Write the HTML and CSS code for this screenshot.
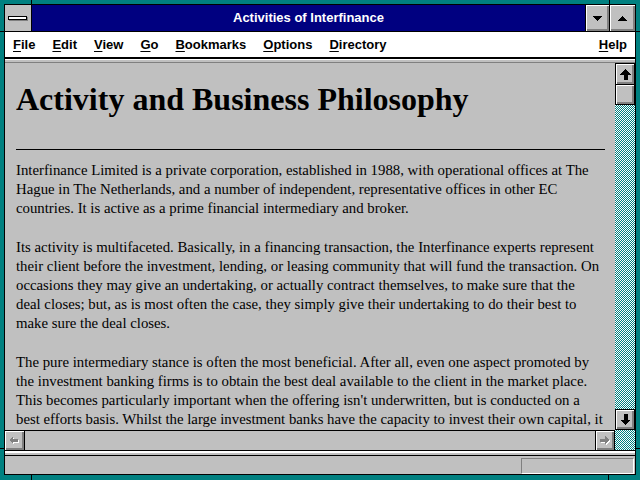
FILE: index.html
```html
<!DOCTYPE html>
<html>
<head>
<meta charset="utf-8">
<title>Activities of Interfinance</title>
<link rel="stylesheet" href="styles.css">
</head>
<body>
<div class="window">
  <div class="frame">
    <div class="titlebar">
      <div class="sysmenu"><span class="sysbar"></span></div>
      <div class="title">Activities of Interfinance</div>
      <div class="tbtn"><svg width="9" height="5" viewBox="0 0 9 5"><polygon points="0,0 9,0 4.5,5" fill="#000"/></svg></div>
      <div class="tbtn tbtn-last"><svg width="9" height="5" viewBox="0 0 9 5"><polygon points="0,5 9,5 4.5,0" fill="#000"/></svg></div>
    </div>
    <div class="menubar">
      <span class="mi"><u>F</u>ile</span>
      <span class="mi"><u>E</u>dit</span>
      <span class="mi"><u>V</u>iew</span>
      <span class="mi"><u>G</u>o</span>
      <span class="mi"><u>B</u>ookmarks</span>
      <span class="mi"><u>O</u>ptions</span>
      <span class="mi"><u>D</u>irectory</span>
      <span class="mi help"><u>H</u>elp</span>
    </div>
    <div class="toolsep"></div>
    <div class="main">
      <div class="content">
        <h1>Activity and Business Philosophy</h1>
        <hr>
        <p>Interfinance Limited is a private corporation, established in 1988, with operational offices at The<br>Hague in The Netherlands, and a number of independent, representative offices in other EC<br>countries. It is active as a prime financial intermediary and broker.</p>
        <p>Its activity is multifaceted. Basically, in a financing transaction, the Interfinance experts represent<br>their client before the investment, lending, or leasing community that will fund the transaction. On<br>occasions they may give an undertaking, or actually contract themselves, to make sure that the<br>deal closes; but, as is most often the case, they simply give their undertaking to do their best to<br>make sure the deal closes.</p>
        <p>The pure intermediary stance is often the most beneficial. After all, even one aspect promoted by<br>the investment banking firms is to obtain the best deal available to the client in the market place.<br>This becomes particularly important when the offering isn't underwritten, but is conducted on a<br>best efforts basis. Whilst the large investment banks have the capacity to invest their own capital, it</p>
      </div>
      <div class="vscroll">
        <div class="sbtn sbtn-up"><svg width="11" height="11" viewBox="0 0 11 11"><polygon points="5.5,0 11,5.5 7.5,5.5 7.5,11 3.5,11 3.5,5.5 0,5.5" fill="#000"/></svg></div>
        <div class="thumb"></div>
        <div class="track"></div>
        <div class="sbtn sbtn-down"><svg width="11" height="11" viewBox="0 0 11 11"><polygon points="5.5,11 11,5.5 7.5,5.5 7.5,0 3.5,0 3.5,5.5 0,5.5" fill="#000"/></svg></div>
      </div>
      <div class="hscroll">
        <div class="sbtn hbtn"><svg width="11" height="10" viewBox="0 0 11 10"><polygon transform="translate(1,1)" points="0,4 4,0 4,2.5 9,2.5 9,5.5 4,5.5 4,8" fill="#fff"/><polygon points="0,4 4,0 4,2.5 9,2.5 9,5.5 4,5.5 4,8" fill="#808080"/></svg></div>
        <div class="htrack"></div>
        <div class="sbtn hbtn"><svg width="11" height="10" viewBox="0 0 11 10"><polygon transform="translate(1,1)" points="9,4 5,0 5,2.5 0,2.5 0,5.5 5,5.5 5,8" fill="#fff"/><polygon points="9,4 5,0 5,2.5 0,2.5 0,5.5 5,5.5 5,8" fill="#808080"/></svg></div>
      </div>
      <div class="corner"></div>
    </div>
    <div class="statsep"></div>
    <div class="status"><div class="statbox"></div></div>
  </div>
</div>
</body>
</html>
```
FILE: styles.css
```css
html, body {
  margin: 0;
  padding: 0;
}
body {
  width: 640px;
  height: 480px;
  overflow: hidden;
}
.window {
  width: 640px;
  height: 480px;
  box-sizing: border-box;
  padding: 4px 4px 5px 4px;
  background:
    linear-gradient(#000, #000) 31px 0 / 1px 4px no-repeat,
    linear-gradient(#000, #000) 609px 0 / 1px 4px no-repeat,
    linear-gradient(#000, #000) 31px 475px / 1px 5px no-repeat,
    linear-gradient(#000, #000) 608px 475px / 1px 5px no-repeat,
    linear-gradient(#000, #000) 0 31px / 4px 1px no-repeat,
    linear-gradient(#000, #000) 636px 31px / 4px 1px no-repeat,
    linear-gradient(#000, #000) 0 448px / 4px 1px no-repeat,
    linear-gradient(#000, #000) 636px 448px / 4px 1px no-repeat,
    #008080;
}
.frame {
  height: 100%;
  box-sizing: border-box;
  border: 1px solid #000;
  display: flex;
  flex-direction: column;
  background: #c0c0c0;
}
.titlebar {
  display: flex;
  height: 27px;
  box-sizing: border-box;
  border-bottom: 1px solid #000;
  background: #000080;
}
.sysmenu {
  width: 27px;
  box-sizing: border-box;
  border-right: 1px solid #000;
  background: #c0c0c0;
  display: flex;
  align-items: center;
  justify-content: center;
}
.sysbar {
  display: block;
  width: 17px;
  height: 2px;
  background: #fff;
  border: 1px solid #000;
  box-shadow: 1px 1px 0 #808080;
  margin-left: -1px;
  margin-top: -1px;
}
.title {
  flex: 1;
  color: #fff;
  font: bold 13px/26px "Liberation Sans", Arial, sans-serif;
  text-align: center;
}
.tbtn {
  width: 24px;
  box-sizing: border-box;
  border-left: 1px solid #000;
  background: #c0c0c0;
  box-shadow: inset 1px 1px 0 #fff, inset -2px -2px 0 #808080;
  display: flex;
  align-items: center;
  justify-content: center;
}
.tbtn-last {
  width: 26px;
}
.tbtn svg, .sbtn svg {
  display: block;
  shape-rendering: crispEdges;
}
.menubar {
  display: flex;
  align-items: center;
  gap: 17px;
  height: 27px;
  box-sizing: border-box;
  padding: 0 8px 1px 8px;
  background: #fff;
  border-bottom: 2px solid #000;
  font: bold 13px "Liberation Sans", Arial, sans-serif;
  color: #000;
}
.mi u {
  text-decoration-thickness: 1px;
  text-underline-offset: 2px;
}
.help {
  margin-left: auto;
}
.toolsep {
  height: 4px;
  box-sizing: border-box;
  background: #c0c0c0;
  border-top: 1px solid #fff;
  border-bottom: 1px solid #808080;
}
.main {
  display: grid;
  grid-template-columns: 1fr 20px;
  grid-template-rows: 367px 20px;
}
.content {
  overflow: hidden;
  padding: 0 10px 0 11px;
  background: #c0c0c0;
  color: #000;
  font-family: "Liberation Serif", "Times New Roman", serif;
}
.content h1 {
  margin: 18px 0 0 0;
  font-size: 32px;
  line-height: 36px;
  font-weight: bold;
  white-space: nowrap;
}
.content hr {
  margin: 32px 0 11px 0;
  height: 0;
  border: 0;
  border-top: 1px solid #000;
}
.content p {
  margin: 0 0 20px 0;
  font-size: 14.8px;
  line-height: 19px;
  white-space: nowrap;
}
.vscroll {
  display: flex;
  flex-direction: column;
}
.sbtn {
  box-sizing: border-box;
  border: 1px solid #000;
  background: #c0c0c0;
  box-shadow: inset 1px 1px 0 #fff, inset -2px -2px 0 #808080;
  display: flex;
  align-items: center;
  justify-content: center;
}
.sbtn-up {
  height: 22px;
}
.sbtn-down {
  height: 21px;
}
.thumb {
  height: 20px;
  box-sizing: border-box;
  border: 1px solid #000;
  border-top: 0;
  background: #c0c0c0;
  box-shadow: inset 1px 1px 0 #fff, inset -2px -2px 0 #808080;
}
.track, .corner {
  flex: 1;
  background: repeating-conic-gradient(#008080 0 25%, #fff 0 50%) 0 0 / 2px 2px;
}
.hscroll {
  display: flex;
  box-sizing: border-box;
  border-top: 1px solid #000;
  background: #c0c0c0;
}
.hbtn {
  width: 20px;
  border-top: 0;
  border-bottom: 0;
}
.hbtn:first-child {
  border-left: 0;
}
.htrack {
  flex: 1;
}
.statsep {
  height: 6px;
  box-sizing: border-box;
  border-top: 1px solid #000;
  border-bottom: 1px solid #000;
  background: linear-gradient(#fff 0 2px, #c0c0c0 2px);
}
.status {
  height: 18px;
  box-sizing: border-box;
  display: flex;
  justify-content: flex-end;
  padding: 2px 1px 0 0;
  background: #c0c0c0;
}
.statbox {
  width: 113px;
  height: 16px;
  box-sizing: border-box;
  border-top: 1px solid #808080;
  border-left: 1px solid #808080;
  border-bottom: 1px solid #fff;
  border-right: 1px solid #fff;
}
```
